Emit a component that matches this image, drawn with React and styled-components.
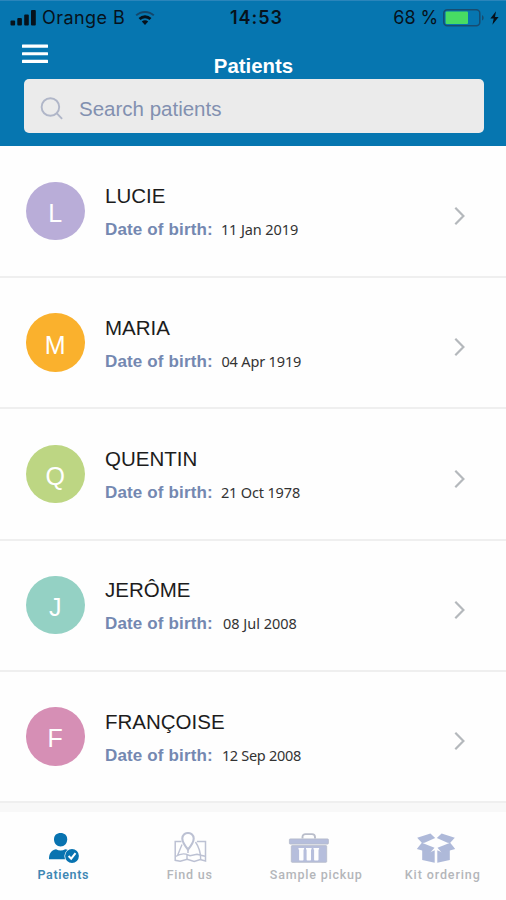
import React from "react";
import styled, { createGlobalStyle } from "styled-components";

const patients = [
  { name: "LUCIE", birth: "11 Jan 2019", color: "#b9add8", gap: 8, spacing: -0.1 },
  { name: "MARIA", birth: "04 Apr 1919", color: "#fab12d", gap: 8.5, spacing: -0.15 },
  { name: "QUENTIN", birth: "21 Oct 1978", color: "#bdd683", gap: 8, spacing: -0.15 },
  { name: "JERÔME", birth: "08 Jul 2008", color: "#94d1c4", gap: 10, spacing: 0 },
  { name: "FRANÇOISE", birth: "12 Sep 2008", color: "#d68fb5", gap: 9, spacing: -0.3 },
];

// icons
const SignalIcon = () => (
  <svg width="28" height="18" viewBox="0 0 28 18" fill="#06121c">
    <rect x="0.5" y="11.5" width="4.6" height="5" rx="1" />
    <rect x="7.3" y="9" width="4.6" height="7.5" rx="1" />
    <rect x="14.2" y="5.5" width="4.6" height="11" rx="1" />
    <rect x="21" y="1" width="4.8" height="15.5" rx="1" />
  </svg>
);

const WifiIcon = () => (
  <svg width="20" height="16" viewBox="0 0 20 16" fill="none" stroke="#06121c">
    <path d="M1.2 5.4C6 .7 14 .7 18.8 5.4" stroke="#14466a" strokeWidth="2" />
    <path d="M4.5 9c3.2-3 7.8-3 11 0" strokeWidth="2.8" />
    <path d="M10 15l-3.2-3.4c1.9-1.7 4.5-1.7 6.4 0z" fill="#06121c" stroke="none" />
  </svg>
);

const BatteryIcon = () => (
  <svg width="42" height="18" viewBox="0 0 42 18" fill="none">
    <rect x="0.8" y="0.8" width="36" height="16" rx="3.5" stroke="#184c70" strokeWidth="1.5" />
    <rect x="2.6" y="2.6" width="22.4" height="12.4" rx="1" fill="#47dc63" />
    <path d="M39 6.2c2.2.6 2.2 4.6 0 5.2z" fill="#184c70" />
  </svg>
);

const BoltIcon = () => (
  <svg width="9" height="14" viewBox="0 0 9 14" fill="#06121c">
    <path d="M6 .3L.4 7.5h3.3L2.4 13.7 8.6 6H5z" />
  </svg>
);

const MenuIcon = () => (
  <svg width="27" height="20" viewBox="0 0 27 20" fill="#fff">
    <rect y="0.5" width="26" height="3.2" rx="0.5" />
    <rect y="8.2" width="26" height="3" rx="0.5" />
    <rect y="15.7" width="26" height="3.2" rx="0.5" />
  </svg>
);

const SearchIcon = () => (
  <svg width="24" height="24" viewBox="0 0 24 24" fill="none" stroke="#b0b6c8" strokeWidth="1.9">
    <circle cx="10.4" cy="10" r="8.8" />
    <path d="M16.6 16.2l5.5 5.6" />
  </svg>
);

const ChevronIcon = () => (
  <svg width="12" height="20" viewBox="0 0 12 20" fill="none" stroke="#b4b8bc" strokeWidth="2.2">
    <path d="M1.3 1.8L9.4 10l-8.1 8.2" />
  </svg>
);

const PatientIcon = () => (
  <svg width="32" height="32" viewBox="0 0 32 32" fill="#0873b0">
    <path d="M12.6 1C8.8 1 6 3.2 6 7.3c0 4.4 2.9 7.2 6.6 7.2s6.6-2.8 6.6-7.2C19.2 3.2 16.4 1 12.6 1z" />
    <path d="M1 27.2c0-5 1.8-9 7-9.9 3 1.6 6.2 1.6 9.2 0 2 .3 3.5 1.1 4.6 2.2v7.7z" />
    <circle cx="24" cy="24" r="7.6" fill="#fff" />
    <circle cx="24" cy="24" r="6.9" />
    <path d="M20.6 24l2.6 2.7 4.3-5.5" fill="none" stroke="#fff" strokeWidth="2" />
  </svg>
);

const MapIcon = () => (
  <svg width="34" height="32" viewBox="0 0 34 32" fill="none" stroke="#bcc1d3" strokeWidth="1.5">
    <path d="M8.5 9.5H2.2V28.3l5 1 7-2 7 2.2 6-2 5.3 1.5V9.5h-8.500" />
    <path d="M9 12.5L4.500 23.500M22.5 10c3.500 5 5.200 11 5.200 17.500M2.500 24.500c4-2.500 7-3.300 10.500-2.300l4 1.500 7-1.500 8 2M14 27.300v-5" strokeWidth="1.4" />
    <path d="M15 17.5C11 12.5 9.3 9.5 9.3 6.4a5.7 5.4 0 0 1 11.4 0c0 3.1-1.7 6.1-5.7 11.100z" fill="#fff" strokeWidth="2.1" />
    <path d="M15 17.500v3.500" />
  </svg>
);

const PickupIcon = () => (
  <svg width="42" height="32" viewBox="0 0 42 32" fill="#b6bedc">
    <path d="M14.5 6.500V5c0-1.800 1.200-2.900 3-2.900h6.500c1.800 0 3 1.100 3 2.900v1.500" fill="none" stroke="#b9bdca" strokeWidth="1.9" />
    <rect x="1.4" y="6.9" width="39" height="5.2" rx="0.8" stroke="#b5bac9" strokeWidth="0.8" />
    <rect x="3.3" y="13.6" width="35.4" height="16.7" rx="0.8" stroke="#b5bac9" strokeWidth="0.8" />
    <g fill="#fdfdfe">
      <path d="M10.5 16h5.600v1.500h-.6v10.200c0 1.200-4.400 1.200-4.400 0V17.500h-.6z" />
      <path d="M18 16h5.600v1.500H23v10.200c0 1.200-4.400 1.200-4.400 0V17.500H18z" />
      <path d="M25.500 16h5.600v1.500h-.6v10.200c0 1.200-4.400 1.200-4.400 0V17.500h-.6z" />
    </g>
  </svg>
);

const KitIcon = () => (
  <svg width="40" height="32" viewBox="0 0 40 32" fill="#aeb9d9">
    <path d="M14.4 1.400l4.800 4.600L8.500 10.800 6 11 1.200 5.800z" />
    <path d="M25.600 1.400l-4.800 4.600 10.700 4.800 2.500.2 4.800-5.200z" />
    <path d="M5.800 10.800L18.500 15.800l-4.300 5L.8 17z" />
    <path d="M34.200 10.800L21.500 15.800l4.300 5L39.200 17z" />
    <path d="M6.200 16.500l8 3.800 4.500-2v12.400L6.200 28z" />
    <path d="M33.800 16.500l-8 3.800-4.500-2v12.400L33.800 28z" />
  </svg>
);

const tabs = [
  { label: "Patients", icon: <PatientIcon />, active: true, spacing: 0.65, inset: [0, 1.5] },
  { label: "Find us", icon: <MapIcon />, spacing: 0.8, inset: [0, 0] },
  { label: "Sample pickup", icon: <PickupIcon />, spacing: 0.8, inset: [15, 0] },
  { label: "Kit ordering", icon: <KitIcon />, spacing: 0.9, inset: [14, 0] },
];

export default function App() {
  return (
    <>
      <GlobalStyle />
      <Screen>
        <Header>
          <StatusBar>
            <StatusLeft>
              <SignalIcon />
              <Carrier>Orange B</Carrier>
              <WifiIcon />
            </StatusLeft>
            <Clock>14:53</Clock>
            <StatusRight>
              <Percent>68 %</Percent>
              <BatteryIcon />
              <BoltIcon />
            </StatusRight>
          </StatusBar>
          <TitleBar>
            <MenuButton aria-label="Menu">
              <MenuIcon />
            </MenuButton>
            <Title>Patients</Title>
          </TitleBar>
          <SearchBox>
            <SearchIcon />
            <SearchText>Search patients</SearchText>
          </SearchBox>
        </Header>
        <PatientList>
          {patients.map((patient) => (
            <PatientRow key={patient.name}>
              <Avatar $color={patient.color}>{patient.name[0]}</Avatar>
              <Details>
                <Name>{patient.name}</Name>
                <BirthLine $gap={patient.gap}>
                  <BirthLabel>Date of birth:</BirthLabel>
                  <BirthDate $spacing={patient.spacing}>{patient.birth}</BirthDate>
                </BirthLine>
              </Details>
              <ChevronIcon />
            </PatientRow>
          ))}
        </PatientList>
        <TabBar>
          {tabs.map((tab) => (
            <Tab key={tab.label} $active={tab.active} $spacing={tab.spacing}>
              <TabIcon $inset={tab.inset}>{tab.icon}</TabIcon>
              <span>{tab.label}</span>
            </Tab>
          ))}
        </TabBar>
      </Screen>
    </>
  );
}

const GlobalStyle = createGlobalStyle`
  * {
    box-sizing: border-box;
  }
  body {
    margin: 0;
    font-family: "Liberation Sans", Arial, sans-serif;
  }
  svg {
    display: block;
    flex-shrink: 0;
  }
`;

const Screen = styled.div`
  display: flex;
  flex-direction: column;
  width: 506px;
  height: 900px;
  overflow: hidden;
  background: #fefefe;
`;

const Header = styled.header`
  height: 146px;
  background: #0676b0;
`;

const StatusBar = styled.div`
  display: grid;
  grid-template-columns: 1fr auto 1fr;
  align-items: center;
  height: 34px;
  padding: 0 7px 0 10px;
  border-top: 1px solid #2a85bb;
  font-family: Inter, sans-serif;
  font-size: 18px;
  color: #06121c;
`;

const StatusLeft = styled.div`
  display: flex;
  align-items: center;
`;

const StatusRight = styled.div`
  display: flex;
  align-items: center;
  justify-content: flex-end;
  gap: 5px;
`;

const Carrier = styled.span`
  margin: 0 10px 0 4px;
  letter-spacing: 0.45px;
`;

const Clock = styled.span`
  padding-left: 4px;
  font-weight: 600;
  letter-spacing: 1px;
`;

const Percent = styled.span`
  letter-spacing: -0.1px;
`;

const TitleBar = styled.div`
  display: grid;
  grid-template-columns: 1fr auto 1fr;
  height: 45px;
  padding: 0 22px;
`;

const MenuButton = styled.button`
  align-self: start;
  justify-self: start;
  margin-top: 10px;
  padding: 0;
  border: 0;
  background: none;
`;

const Title = styled.h1`
  margin: 21px 0 0;
  padding-left: 1px;
  font-size: 20.4px;
  line-height: 23px;
  color: #fff;
`;

const SearchBox = styled.div`
  display: flex;
  align-items: center;
  gap: 15px;
  height: 54px;
  margin: 0 22px 0 24px;
  padding: 5px 16px 0;
  border-radius: 5px;
  background: #ebebeb;
`;

const SearchText = styled.span`
  font-size: 20.5px;
  color: #8290b0;
`;

const PatientList = styled.main`
  flex-shrink: 0;
  padding-top: 0.7px;
`;

const PatientRow = styled.div`
  display: flex;
  align-items: flex-start;
  height: 131.3px;
  padding: 35.3px 40px 0 26px;
  border-bottom: 2px solid #efefef;

  > svg {
    margin-top: 24px;
  }
`;

const Avatar = styled.div`
  display: flex;
  align-items: center;
  justify-content: center;
  width: 58.5px;
  height: 58.5px;
  padding-top: 5px;
  border-radius: 50%;
  background: ${({ $color }) => $color};
  font-size: 25px;
  color: #fff;
`;

const Details = styled.div`
  flex: 1;
  padding: 2.4px 0 0 20.5px;
`;

const Name = styled.div`
  font-size: 20.5px;
  line-height: 24px;
  color: #1c1c1c;
`;

const BirthLine = styled.div`
  display: flex;
  align-items: baseline;
  gap: ${({ $gap }) => $gap}px;
  margin-top: 9px;
  line-height: 24px;
`;

const BirthLabel = styled.span`
  font-size: 17px;
  font-weight: 700;
  letter-spacing: 0.15px;
  color: #7488b1;
`;

const BirthDate = styled.span`
  font-family: "Noto Sans", sans-serif;
  font-size: 14.5px;
  letter-spacing: ${({ $spacing }) => $spacing}px;
  color: #333;
`;

const TabBar = styled.nav`
  display: grid;
  grid-template-columns: repeat(4, 1fr);
  flex: 1;
  border-top: 9px solid #f8f8f8;
`;

const Tab = styled.div`
  display: flex;
  flex-direction: column;
  align-items: center;
  gap: 3px;
  padding-top: 20px;
  font-family: Roboto, sans-serif;
  font-size: 12.5px;
  font-weight: ${({ $active }) => ($active ? 600 : 500)};
  line-height: 15px;
  letter-spacing: ${({ $spacing }) => $spacing}px;
  color: ${({ $active }) => ($active ? "#3f88b4" : "#b4b6ba")};
`;

// some icons sit off their label's centre
const TabIcon = styled.div`
  padding: ${({ $inset }) => `0 ${$inset[0]}px 0 ${$inset[1]}px`};
`;
